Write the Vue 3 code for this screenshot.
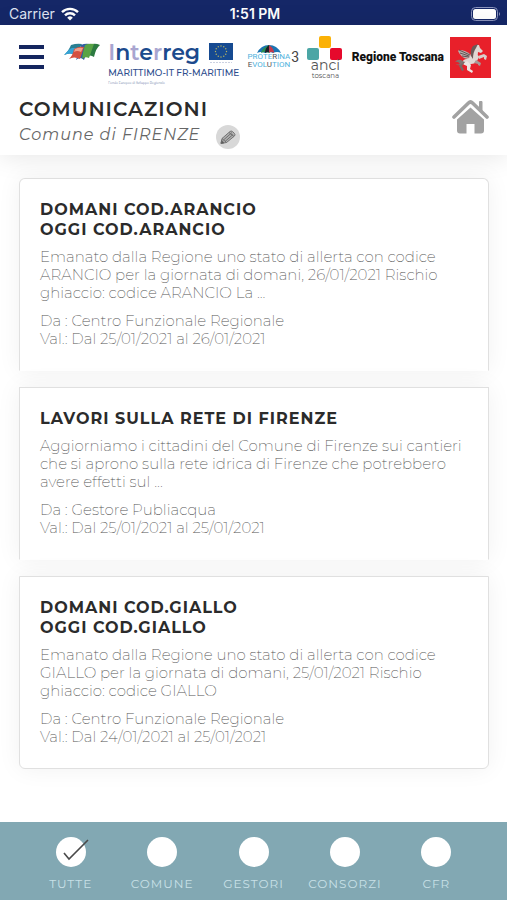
<script setup>
import { ref } from 'vue';

const comune = 'FIRENZE';
const filtro = ref('tutte');

const filtri = [
  { id: 'tutte', label: 'TUTTE' },
  { id: 'comune', label: 'COMUNE' },
  { id: 'gestori', label: 'GESTORI' },
  { id: 'consorzi', label: 'CONSORZI' },
  { id: 'cfr', label: 'CFR' },
];

const comunicazioni = [
  {
    id: 1,
    titolo: ['DOMANI COD.ARANCIO', 'OGGI COD.ARANCIO'],
    testo: [
      'Emanato dalla Regione uno stato di allerta con codice',
      'ARANCIO per la giornata di domani, 26/01/2021 Rischio',
      'ghiaccio: codice ARANCIO La ...',
    ],
    da: 'Centro Funzionale Regionale',
    validita: 'Dal 25/01/2021 al 26/01/2021',
  },
  {
    id: 2,
    titolo: ['LAVORI SULLA RETE DI FIRENZE'],
    testo: [
      'Aggiorniamo i cittadini del Comune di Firenze sui cantieri',
      'che si aprono sulla rete idrica di Firenze che potrebbero',
      'avere effetti sul ...',
    ],
    da: 'Gestore Publiacqua',
    validita: 'Dal 25/01/2021 al 25/01/2021',
  },
  {
    id: 3,
    titolo: ['DOMANI COD.GIALLO', 'OGGI COD.GIALLO'],
    testo: [
      'Emanato dalla Regione uno stato di allerta con codice',
      'GIALLO per la giornata di domani, 25/01/2021 Rischio',
      'ghiaccio: codice GIALLO',
    ],
    da: 'Centro Funzionale Regionale',
    validita: 'Dal 24/01/2021 al 25/01/2021',
  },
];

// posizioni delle 12 stelle della bandiera UE
const stelle = Array.from({ length: 12 }, (_, i) => {
  const a = (i * Math.PI) / 6;
  return { x: 12 + 5.5 * Math.sin(a), y: 8.5 - 5.5 * Math.cos(a) };
});
</script>

<template>
  <div class="app">
    <div class="status-bar">
      <div class="carrier">
        <span>Carrier</span>
        <svg width="18" height="14" viewBox="0 0 18 14" fill="none" stroke="#fff" stroke-width="2.4">
          <path d="M1 5.2a11.4 11.4 0 0 1 16 0" />
          <path d="M4 8.3a7.1 7.1 0 0 1 10 0" />
          <path d="M9 13.6 6.2 10.7a4 4 0 0 1 5.6 0z" fill="#fff" stroke="none" />
        </svg>
      </div>
      <span class="ora">1:51 PM</span>
      <svg class="batteria" width="30" height="14" viewBox="0 0 30 14">
        <rect x="0.5" y="0.5" width="26" height="13" rx="4" fill="none" stroke="#8b94bd" />
        <rect x="2" y="2" width="23" height="10" rx="2.5" fill="#fff" />
        <path d="M28 5q2 2 0 4z" fill="#8b94bd" />
      </svg>
    </div>

    <header class="top">
      <div class="loghi">
        <button class="menu" aria-label="Menu">
          <span></span>
          <span></span>
          <span></span>
        </button>

        <div class="interreg">
          <svg width="36" height="18" viewBox="0 0 36 18">
            <path d="M7 2Q13 0 18 1L12 12Q6 9 0 12Q4 9 7 2z" fill="#2a7f92" />
            <path d="M0 12Q5 6 8 5L13 5L11 12Q6 9 0 12z" fill="#35a3d6" />
            <path d="M17 2Q21 0 26 1L20 17Q16 13 12 17Q15 11 17 2z" fill="#2f5da3" />
            <path d="M10 6Q15 3 20 4L16 16Q10 13 5 16Q9 12 10 6z" fill="#d4503f" />
            <path d="M11 6Q15 4 19 5L17 9Q13 7 10 9z" fill="#f0a08c" />
            <path d="M28 1Q32 0 36 2Q32 5 30 14Q26 11 22 14Q26 7 28 1z" fill="#2c7a41" />
            <path d="M21 2Q25 0 30 1L25 15Q21 13 18 16Q19 8 21 2z" fill="#58a345" />
          </svg>
          <div class="interreg-testo">
            <div class="interreg-riga">
              <span class="interreg-nome"><i>I</i>n<i>t</i>e<i>r</i>reg</span>
              <svg width="24" height="21" viewBox="0 0 24 21">
                <rect width="24" height="17" fill="#164a91" />
                <circle v-for="(s, i) in stelle" :key="i" :cx="s.x" :cy="s.y" r="0.7" fill="#b9b660" />
                <path d="M1 19.5h22" stroke="#ccd2e2" stroke-dasharray="2 1" />
              </svg>
            </div>
            <span class="marittimo">MARITTIMO-IT FR-MARITIME</span>
            <span class="fondo">Fondo Europeo di Sviluppo Regionale</span>
          </div>
        </div>

        <div class="proterina">
          <div class="proterina-testo">
            <svg width="24" height="8" viewBox="0 0 24 8">
              <path d="M0 8Q4 0 12 0T24 8Q20 6 16 8Q12 6 8 8Q4 6 0 8z" fill="#1b75b3" />
              <path d="M12 0Q5 3 4 8Q8 6 12 8z" fill="#2b8d54" />
              <path d="M12 0Q8 3 8 8Q12 6 13 8z" fill="#1b202b" />
              <path d="M12 0Q17 3 17 8Q14 6 12 8z" fill="#c3394a" />
            </svg>
            <span>PROTE<b>R</b>INA</span>
            <span><b>E</b>VOL<b>U</b>TION</span>
          </div>
          <span class="tre">3</span>
        </div>

        <div class="anci">
          <svg width="36" height="24" viewBox="0 0 36 24">
            <rect x="12" y="0" width="12" height="12" rx="2" fill="#fbb106" />
            <rect x="0" y="12" width="12" height="12" rx="2" fill="#4ba6a5" />
            <rect x="23" y="12" width="12" height="12" rx="2" fill="#e6092c" />
          </svg>
          <span class="anci-nome">anci</span>
          <span class="anci-sotto">toscana</span>
        </div>

        <div class="regione">
          <span>Regione Toscana</span>
          <svg width="41" height="41" viewBox="0 0 41 41">
            <rect width="41" height="41" fill="#e8202a" />
            <path d="M9 13Q16 13 21 18L18 22Q11 21 8 14z" fill="#b9aeaa" />
            <path d="M9 13l11 5M10 16l9 3M12 19l7 1" stroke="#5d4a49" stroke-width="0.9" />
            <path d="M21 17Q22 10 26 8L29 8L30 11L33 14L31 16L28 15Q27 18 29 20L27 24Q25 27 21 27Q18 29 15 28L12 26Q13 22 17 22Q20 21 21 17z" fill="#e0d8d4" />
            <path d="M23 9Q20 13 21 19L23 22Q23 15 26 11L28 7z" fill="#6b5a58" />
            <path d="M28 19L34 17L37 19L36 23L34 22L34 20L29 22z" fill="#d8cfcb" />
            <path d="M26 23L31 26L30 29L28 28L28 27L24 26z" fill="#a79a97" />
            <path d="M17 24L21 28L20 32L23 34L22 36L17 33L17 29L13 27z" fill="#ece6e3" />
            <path d="M15 25L12 29L14 33L12 34L9 29L12 24z" fill="#7a6866" />
            <path d="M13 24Q8 21 5 25Q8 24 10 27Q6 28 5 27Q9 30 13 26z" fill="#857371" />
          </svg>
        </div>
      </div>

      <div class="intestazione">
        <div>
          <h1>COMUNICAZIONI</h1>
          <div class="comune">
            <span>Comune di {{ comune }}</span>
            <button class="modifica" aria-label="Modifica comune">
              <svg width="16" height="16" viewBox="0 0 16 16" fill="none" stroke="#6a6a6a" stroke-width="0.9">
                <path d="M1 14.5l1-5L10 2.5q1-1 2.5 0l2 2q1 1 0 2.5L6.5 13.5z" fill="#b0b0b0" />
                <path d="M2 9.5l4.5 4M9 3.5l5 4M3.5 11l8.5-7.5M5 12.5l8-7" />
                <path d="M1 14.5l.7-3 2.3 2.3z" fill="#555" />
              </svg>
            </button>
          </div>
        </div>
        <a class="home" href="#" aria-label="Home">
          <svg width="37" height="35" viewBox="0 0 37 35">
            <path d="M2 18 16.5 4q2-2 4 0L35 18" fill="none" stroke="#a2a2a2" stroke-width="3.6" stroke-linecap="round" />
            <path d="M27.5 2.5h2.5v9l-2.5-2.5z" fill="#a2a2a2" stroke="#a2a2a2" stroke-linejoin="round" />
            <path d="M5 20.5 18.5 8.500 32 20.5v11q0 3-3 3h-6.5v-9.5h-8v9.5H8q-3 0-3-3z" fill="#a2a2a2" />
          </svg>
        </a>
      </div>
    </header>

    <main class="lista">
      <article v-for="c in comunicazioni" :key="c.id" class="card">
        <h2><span v-for="riga in c.titolo" :key="riga">{{ riga }}</span></h2>
        <p><span v-for="riga in c.testo" :key="riga">{{ riga }}</span></p>
        <p>
          <span>Da : {{ c.da }}</span>
          <span>Val.: {{ c.validita }}</span>
        </p>
      </article>
    </main>

    <footer class="filtri">
      <label v-for="f in filtri" :key="f.id" class="filtro">
        <span class="cerchio">
          <input v-model="filtro" type="radio" name="filtro" :value="f.id">
          <svg v-if="filtro === f.id" class="spunta" width="26" height="22" viewBox="0 0 26 22">
            <path d="M1 14l5 6L25 1" fill="none" stroke="#4a4a4a" stroke-width="1.6" />
          </svg>
        </span>
        <span>{{ f.label }}</span>
      </label>
    </footer>
  </div>
</template>

<style>
body {
  background: #fff;
}
</style>

<style scoped>
.app {
  display: flex;
  flex-direction: column;
  min-height: 100vh;
  font-family: Montserrat, Inter, 'Liberation Sans', sans-serif;
  color: #2b2b2b;
}
button {
  border: none;
  padding: 0;
  background: none;
  cursor: pointer;
}
svg {
  display: block;
  flex-shrink: 0;
}
.status-bar {
  display: grid;
  grid-template-columns: 1fr auto 1fr;
  align-items: center;
  height: 25px;
  padding: 2px 6px 0 9px;
  box-sizing: border-box;
  background: #152767;
  color: #fff;
  font-family: Inter, 'Liberation Sans', sans-serif;
  font-size: 14px;
}
.carrier {
  display: flex;
  align-items: center;
  gap: 6px;
  color: #dfe3f2;
}
.ora {
  font-weight: 600;
}
.batteria {
  justify-self: end;
}
.top {
  position: relative;
  padding: 8px 16px 0 19px;
  background: #fff;
  box-shadow: 0 2px 24px rgba(0, 0, 0, 0.1);
}
.loghi {
  display: flex;
  align-items: center;
  justify-content: space-between;
  height: 48px;
}
.menu {
  display: flex;
  flex-direction: column;
  gap: 6px;
}
.menu span {
  width: 25px;
  height: 4px;
  background: #15265f;
}
.interreg {
  display: flex;
  gap: 8px;
  margin-left: 12px;
  padding-top: 14px;
}
.interreg-testo {
  display: flex;
  flex-direction: column;
}
.interreg-riga {
  display: flex;
  gap: 9px;
  height: 23px;
}
.interreg-nome {
  color: #1b4a8d;
  font-size: 22px;
  font-weight: 600;
  line-height: 20px;
}
.interreg-nome i {
  color: #a9a5d0;
  font-style: normal;
}
.marittimo {
  color: #2b4c8c;
  font-size: 9px;
  font-weight: 500;
  line-height: 14px;
}
.fondo {
  color: #64779f;
  font-size: 3px;
  line-height: 6px;
}
.proterina {
  display: flex;
  align-items: center;
  gap: 1px;
  color: #4fb2dd;
  font-family: Roboto, sans-serif;
  font-size: 8px;
  line-height: 8px;
}
.proterina-testo {
  display: flex;
  flex-direction: column;
  align-items: center;
}
.proterina b {
  color: #555;
  font-weight: 400;
}
.tre {
  color: #444;
  font-size: 14px;
}
.anci {
  display: flex;
  flex-direction: column;
  align-items: center;
  padding-top: 2px;
  color: #555;
}
.anci-nome {
  font-size: 14px;
  line-height: 11px;
}
.anci-sotto {
  font-size: 7px;
  line-height: 9px;
}
.regione {
  display: flex;
  align-items: center;
  gap: 6px;
  color: #111;
  font-family: Roboto, sans-serif;
  font-size: 12px;
  font-weight: 900;
}
.intestazione {
  display: flex;
  justify-content: space-between;
  padding: 16px 2px 6px 0;
}
h1 {
  margin: 0;
  font-size: 20px;
  font-weight: 600;
  letter-spacing: 1px;
  line-height: 24px;
}
.comune {
  display: flex;
  align-items: center;
  gap: 16px;
  color: #666;
  font-size: 16px;
  font-style: italic;
  letter-spacing: 1px;
  line-height: 28px;
}
.modifica {
  display: flex;
  align-items: center;
  justify-content: center;
  width: 24px;
  height: 24px;
  margin-top: 4px;
  border-radius: 50%;
  background: #d8d8d8;
}
.home {
  padding-top: 2px;
}
.lista {
  display: flex;
  flex: 1;
  flex-direction: column;
  gap: 16px;
  padding: 23px 18px 16px 19px;
}
.card {
  padding: 21px 20px 22px;
  border: 1px solid #e0e0e0;
  border-bottom-color: transparent;
  background: #fff;
  box-shadow: 0 0 24px rgba(0, 0, 0, 0.06);
}
.card:first-child {
  border-radius: 6px 6px 0 0;
}
.card:last-child {
  border-bottom-color: #e0e0e0;
  border-radius: 0 0 6px 6px;
}
.card span {
  display: block;
}
h2 {
  margin: 0;
  font-size: 16px;
  font-weight: 700;
  letter-spacing: 1px;
  line-height: 20px;
}
.card p {
  margin: 8px 0 0;
  color: #555;
  font-size: 15px;
  font-weight: 200;
  line-height: 18px;
}
.card p + p {
  margin-top: 10px;
}
.filtri {
  display: flex;
  justify-content: space-around;
  padding: 15px 25px 9px;
  background: #82a8b3;
}
.filtro {
  display: flex;
  flex: 1;
  flex-direction: column;
  align-items: center;
  gap: 9px;
  color: #c8e0e7;
  font-size: 12px;
  letter-spacing: 1px;
  line-height: 15px;
}
.cerchio {
  position: relative;
  display: flex;
}
.cerchio input {
  appearance: none;
  width: 30px;
  height: 30px;
  margin: 0;
  border-radius: 50%;
  background: #fff;
}
.spunta {
  position: absolute;
  left: 7px;
  top: 2px;
}
</style>
